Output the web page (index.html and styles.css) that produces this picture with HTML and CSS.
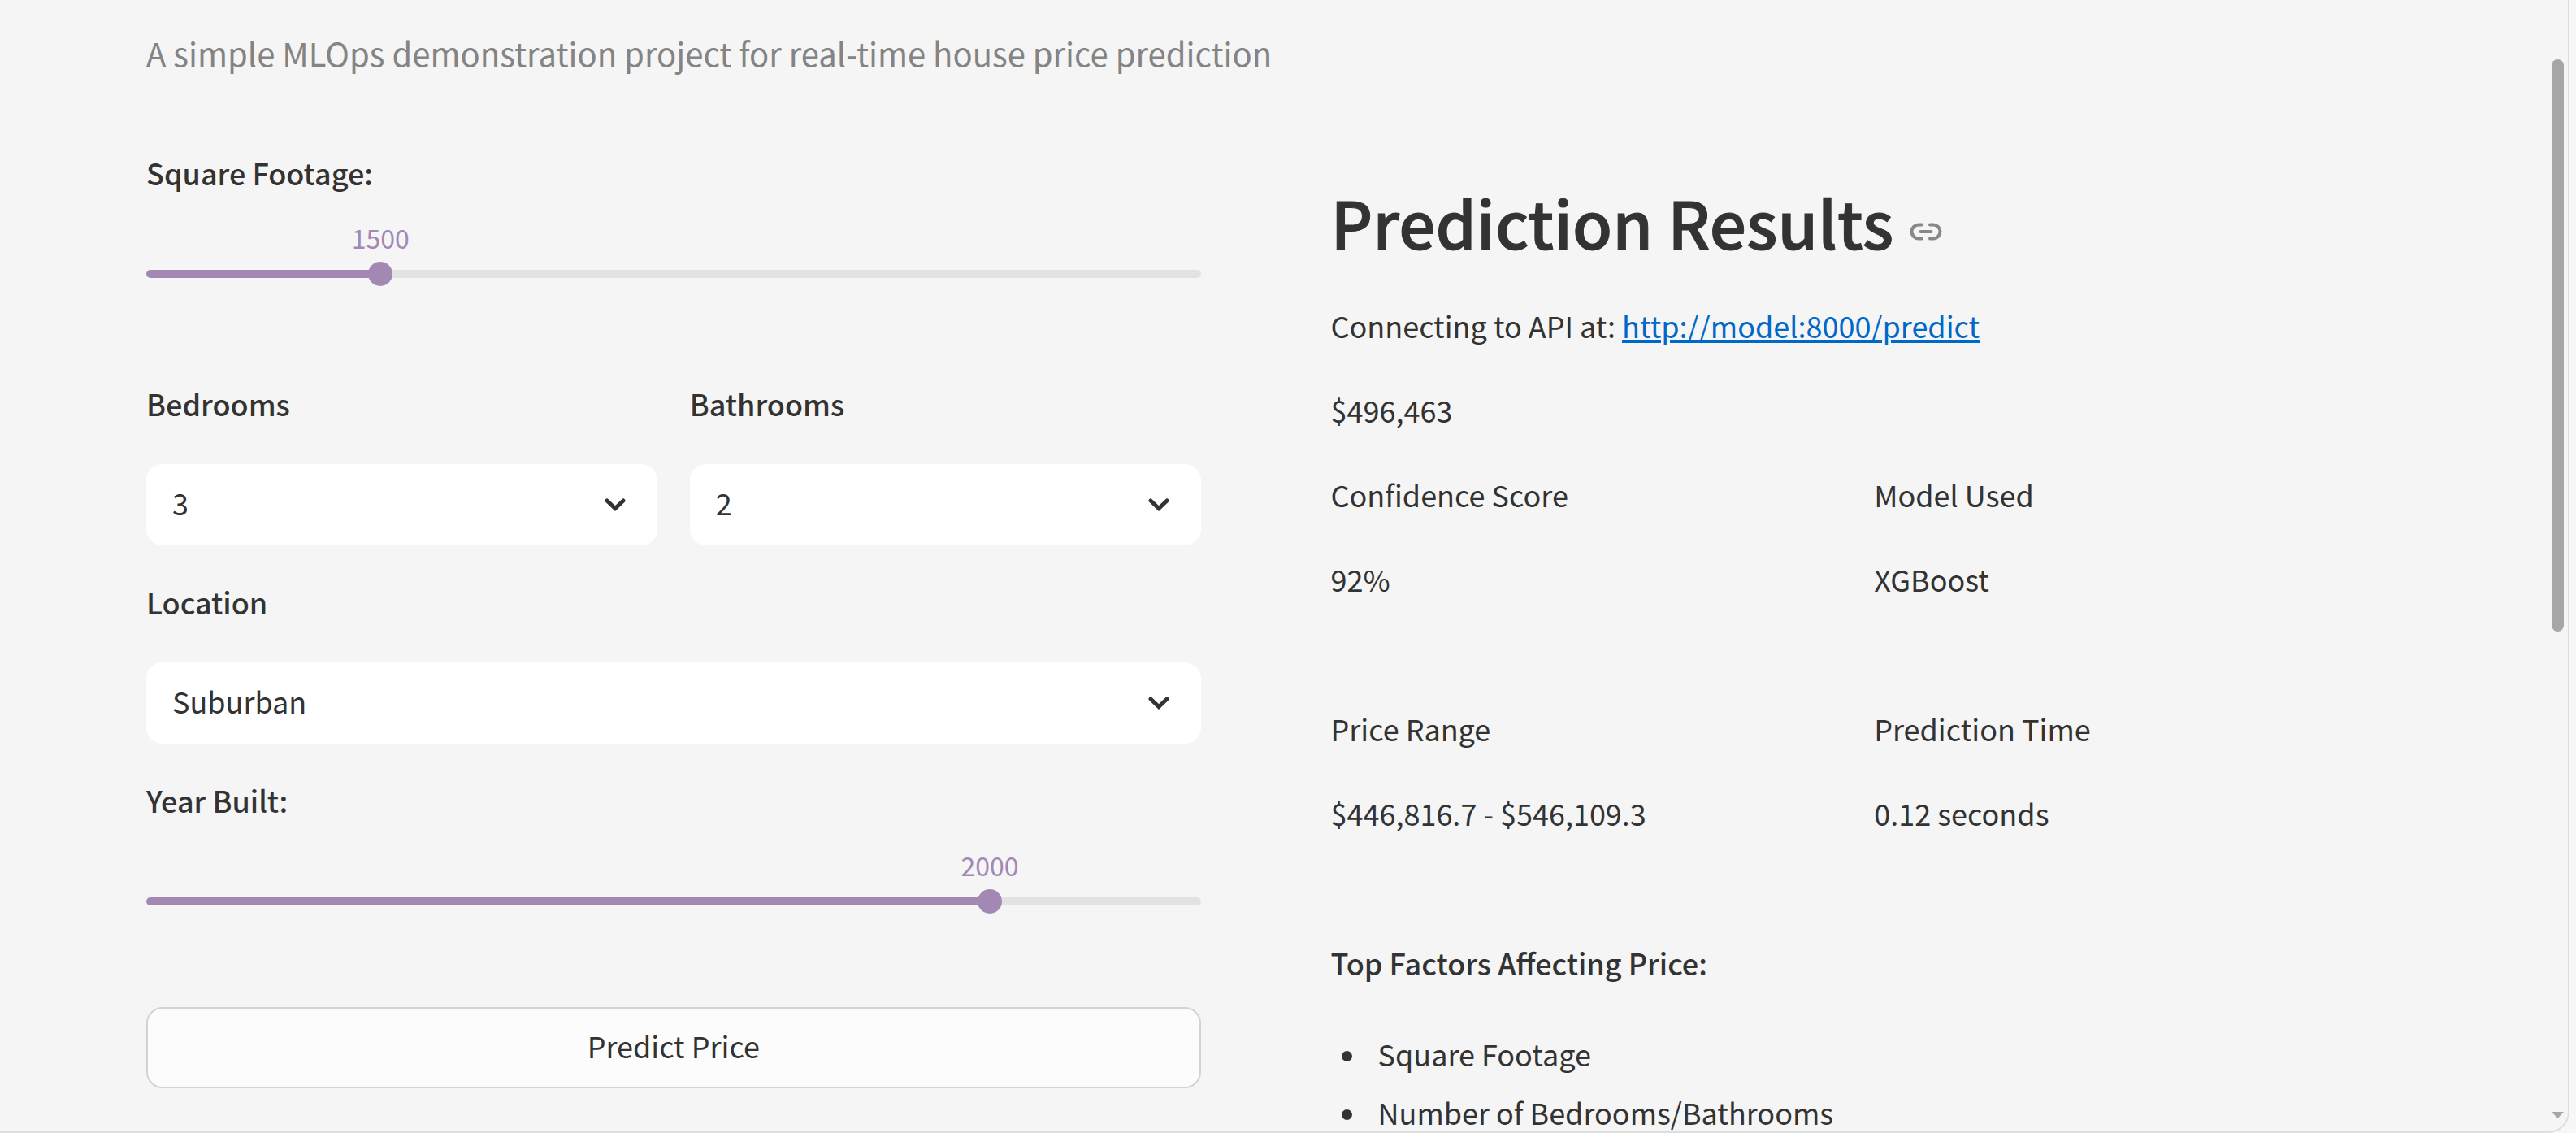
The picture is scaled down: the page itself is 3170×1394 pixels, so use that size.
FILE: index.html
```html
<!DOCTYPE html>
<html lang="en">
<head>
<meta charset="utf-8">
<title>House Price Prediction</title>
<link rel="stylesheet" href="styles.css">
</head>
<body>
<div class="window">
  <main class="page">
    <p class="subtitle">A simple MLOps demonstration project for real-time house price prediction</p>
    <div class="columns">
      <form class="form">
        <div class="slider-field">
          <label class="label" for="sqft">Square Footage:</label>
          <div class="slider" style="--pos: 22.22%">
            <output class="slider-value" for="sqft">1500</output>
            <input class="slider-input" id="sqft" type="range" min="500" max="5000" step="50" value="1500">
          </div>
        </div>
        <div class="pair">
          <div class="field">
            <label class="label" for="bedrooms">Bedrooms</label>
            <div class="select">
              <select class="select-input" id="bedrooms"><option>1</option><option>2</option><option selected>3</option><option>4</option></select>
              <svg class="chevron" viewBox="0 0 26 16" aria-hidden="true"><path d="M3 3 13 12.5 23 3"/></svg>
            </div>
          </div>
          <div class="field">
            <label class="label" for="bathrooms">Bathrooms</label>
            <div class="select">
              <select class="select-input" id="bathrooms"><option>1</option><option selected>2</option><option>3</option></select>
              <svg class="chevron" viewBox="0 0 26 16" aria-hidden="true"><path d="M3 3 13 12.5 23 3"/></svg>
            </div>
          </div>
        </div>
        <div class="field">
          <label class="label" for="location">Location</label>
          <div class="select">
            <select class="select-input" id="location"><option>Urban</option><option selected>Suburban</option><option>Rural</option></select>
            <svg class="chevron" viewBox="0 0 26 16" aria-hidden="true"><path d="M3 3 13 12.5 23 3"/></svg>
          </div>
        </div>
        <div class="slider-field">
          <label class="label" for="year">Year Built:</label>
          <div class="slider" style="--pos: 80%">
            <output class="slider-value" for="year">2000</output>
            <input class="slider-input" id="year" type="range" min="1900" max="2025" value="2000">
          </div>
        </div>
        <button class="submit" type="button">Predict Price</button>
      </form>
      <section class="results" id="results">
        <h2 class="title">Prediction Results
          <a class="anchor" href="#results" aria-label="Link to heading"><svg class="anchor-icon" viewBox="0 0 40 22" aria-hidden="true"><path d="M15 2.500H11a8.500 8.500 0 0 0 0 17h4M25 2.500h4a8.500 8.500 0 0 1 0 17h-4M13.500 11h13"/></svg></a>
        </h2>
        <p class="text">Connecting to API at: <a class="link" href="http://model:8000/predict">http://model:8000/predict</a></p>
        <p class="text">$496,463</p>
        <div class="metrics">
          <div class="metric"><p class="text">Confidence Score</p><p class="text">92%</p></div>
          <div class="metric"><p class="text">Model Used</p><p class="text">XGBoost</p></div>
          <div class="metric"><p class="text">Price Range</p><p class="text">$446,816.7 - $546,109.3</p></div>
          <div class="metric"><p class="text">Prediction Time</p><p class="text">0.12 seconds</p></div>
        </div>
        <h3 class="label">Top Factors Affecting Price:</h3>
        <ul class="factors">
          <li class="factor">Square Footage</li>
          <li class="factor">Number of Bedrooms/Bathrooms</li>
        </ul>
      </section>
    </div>
  </main>
  <div class="scrollbar" aria-hidden="true">
    <div class="thumb"></div>
    <svg class="arrow" viewBox="0 0 15 8"><path d="M0 0h15L7.500 8z"/></svg>
  </div>
</div>
</body>
</html>
```
FILE: styles.css
```css
* { box-sizing: border-box; }

body {
  margin: 0;
  height: 100vh;
  overflow: hidden;
  padding: 0 8px 0 0;
  background: #f7f7f7;
  color: #333;
  font: 36px/58px "Noto Sans CJK JP", "Noto Sans", sans-serif;
}

p, h2, h3, ul { margin: 0; padding: 0; }

.window {
  position: relative;
  height: 100%;
  overflow: hidden;
  background: #f5f5f5;
  border: solid #dedede;
  border-width: 0 2px 2px 0;
  border-bottom-right-radius: 26px;
}

.page { padding: 32px 225px 0 180px; }

.subtitle {
  margin-bottom: 85px;
  color: #848484;
  font-size: 40px;
  line-height: 66px;
}

.columns {
  display: grid;
  grid-template-columns: 1fr 1fr;
  gap: 160px;
}

.form { display: flex; flex-direction: column; gap: 40px; }
.field { display: flex; flex-direction: column; gap: 40px; }
.pair { display: grid; grid-template-columns: 1fr 1fr; gap: 40px; }

.text, .label { display: block; padding-bottom: 6px; }
.label { font-size: 36px; font-weight: 500; }

.slider { position: relative; height: 180px; padding: 75px 0; }

.slider::before {
  content: "";
  position: absolute;
  inset: 85px 0;
  border-radius: 5px;
  background: linear-gradient(to right, #a388b4 var(--pos), #e2e2e2 var(--pos));
}

.slider-value {
  position: absolute;
  top: 18px;
  left: var(--pos);
  width: 100px;
  margin-left: -50px;
  text-align: center;
  color: #a388b4;
  font-size: 32px;
  line-height: 54px;
}

.slider-input {
  position: relative;
  display: block;
  width: calc(100% + 30px);
  height: 30px;
  margin: 0 -15px;
  background: none;
  appearance: none;
}

.slider-input::-webkit-slider-thumb {
  appearance: none;
  width: 30px;
  height: 30px;
  border-radius: 50%;
  background: #a388b4;
}

.select { display: grid; align-items: center; }
.select > * { grid-area: 1 / 1; }

.select-input {
  width: 100%;
  height: 100px;
  padding: 0 32px 6px;
  border: 0;
  border-radius: 20px;
  background: #fff;
  color: inherit;
  font: inherit;
  appearance: none;
}

.chevron {
  justify-self: end;
  width: 26px;
  height: 16px;
  margin-right: 39px;
  fill: none;
  stroke: #333;
  stroke-width: 5;
  stroke-linecap: round;
  pointer-events: none;
}

.submit {
  height: 100px;
  padding: 0 0 6px;
  border: 2px solid #d3d3d3;
  border-radius: 20px;
  background: #fcfcfc;
  color: inherit;
  font: inherit;
}

.results { display: flex; flex-direction: column; gap: 40px; padding-top: 41px; }

/* The medium weight with a thin outline gives a semibold. */
.title {
  display: flex;
  align-items: center;
  gap: 20px;
  margin-bottom: 11px;
  font-size: 80px;
  font-weight: 500;
  line-height: 96px;
  -webkit-text-stroke: 1px #333;
}

.anchor { display: flex; padding-top: 26px; }
.anchor-icon { width: 40px; height: 22px; fill: none; stroke: #888; stroke-width: 4; stroke-linecap: round; }

.link {
  color: #0068c9;
  text-decoration-thickness: 4px;
  text-underline-offset: 2px;
}

.metrics { display: grid; grid-template-columns: 1fr 1fr; gap: 120px 40px; margin-bottom: 80px; }
.metric { display: flex; flex-direction: column; gap: 40px; }

.factors { display: flex; flex-direction: column; gap: 14px; margin-top: 8px; list-style: none; }
.factor { display: flex; align-items: center; gap: 32px; padding-left: 13px; }
.factor::before { content: ""; width: 13px; height: 13px; margin-top: 6px; border-radius: 50%; background: #333; }

.scrollbar {
  position: absolute;
  inset: 73px 5px 16px auto;
  width: 15px;
  display: flex;
  flex-direction: column;
  justify-content: space-between;
}

.thumb { height: 54%; border-radius: 8px; background: #a6a6a6; }
.arrow { height: 8px; fill: #a6a6a6; }
```
